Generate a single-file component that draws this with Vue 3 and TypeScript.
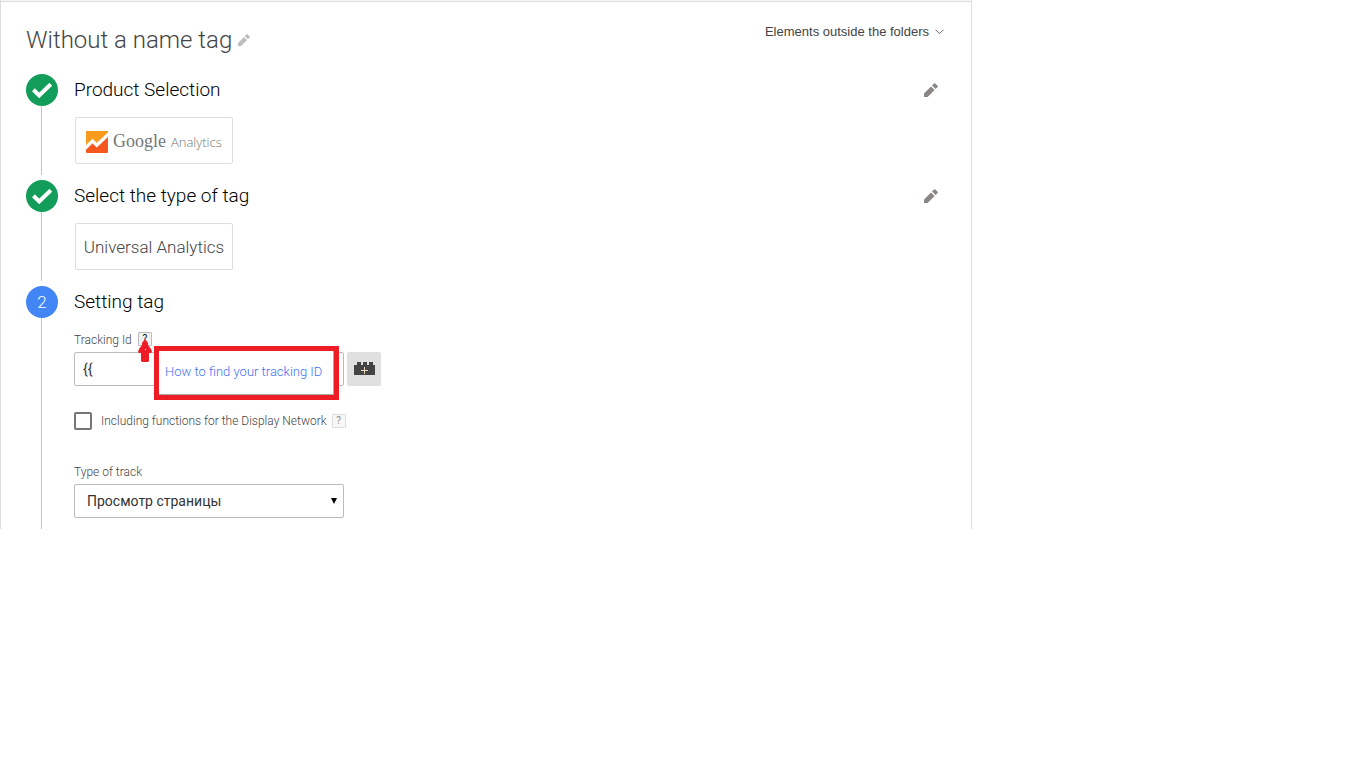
<script setup lang="ts">
import { ref } from 'vue'

const trackingId = ref('{{')
const displayFeatures = ref(false)
const trackType = ref('pageview')
</script>

<template>
  <main class="panel">
    <header class="head">
      <h1 class="title">Without a name tag</h1>
      <button class="icon-btn rename" type="button" aria-label="Rename tag">
        <svg width="12" height="12" viewBox="0 0 14 14" fill="#bdbdbd">
          <path d="M0 10.4V14h3.6l7-7L7 3.4zM13.6 4a.9.9 0 0 0 0-1.2L11.2.4a.9.9 0 0 0-1.2 0L8 2.4 11.6 6z" />
        </svg>
      </button>
      <button class="folders" type="button">
        <span>Elements outside the folders</span>
        <svg width="9" height="6" viewBox="0 0 9 6" fill="none" stroke="#666" stroke-width="1"><path d="M.5.7l4 4 4-4" /></svg>
      </button>
    </header>

    <section class="step">
      <div class="rail">
        <span class="dot done">
          <svg width="32" height="32" viewBox="0 0 32 32" fill="none" stroke="#fff" stroke-width="4"><path d="M7.4 15.8l5.8 5.6L24.8 10.2" /></svg>
        </span>
        <span class="line"></span>
      </div>
      <div class="body">
        <div class="step-head">
          <h2>Product Selection</h2>
          <button class="icon-btn" type="button" aria-label="Edit product selection">
            <svg width="14" height="14" viewBox="0 0 14 14" fill="#8a8682">
              <path d="M0 10.4V14h3.6l7-7L7 3.4zM13.6 4a.9.9 0 0 0 0-1.2L11.2.4a.9.9 0 0 0-1.2 0L8 2.4 11.6 6z" />
            </svg>
          </button>
        </div>
        <div class="card product">
          <svg width="22" height="22" viewBox="0 0 22 22">
            <rect width="22" height="22" rx="1" fill="#f4581f" />
            <path d="M1 0h20a1 1 0 0 1 1 1v3L11 16 7 11 0 17V1a1 1 0 0 1 1-1z" fill="#f99b1c" />
            <path d="M-1 17.2L6.5 10l4.3 4.2L23 2.8" fill="none" stroke="#fff" stroke-width="3.4" />
          </svg>
          <span class="google">Google</span>
          <span class="analytics">Analytics</span>
        </div>
      </div>
    </section>

    <section class="step">
      <div class="rail">
        <span class="dot done">
          <svg width="32" height="32" viewBox="0 0 32 32" fill="none" stroke="#fff" stroke-width="4"><path d="M7.4 15.8l5.8 5.6L24.8 10.2" /></svg>
        </span>
        <span class="line"></span>
      </div>
      <div class="body">
        <div class="step-head">
          <h2>Select the type of tag</h2>
          <button class="icon-btn" type="button" aria-label="Edit tag type">
            <svg width="14" height="14" viewBox="0 0 14 14" fill="#8a8682">
              <path d="M0 10.4V14h3.6l7-7L7 3.4zM13.6 4a.9.9 0 0 0 0-1.2L11.2.4a.9.9 0 0 0-1.2 0L8 2.4 11.6 6z" />
            </svg>
          </button>
        </div>
        <div class="card kind">Universal Analytics</div>
      </div>
    </section>

    <section class="step last">
      <div class="rail">
        <span class="dot current">2</span>
        <span class="line"></span>
      </div>
      <div class="body">
        <div class="step-head">
          <h2>Setting tag</h2>
        </div>

        <div class="field tracking">
          <div class="label-row">
            <label for="tracking-id">Tracking Id</label>
            <button class="help active" type="button" aria-label="Help">?</button>
          </div>
          <div class="control-row">
            <input id="tracking-id" v-model="trackingId" class="text" type="text" />
            <button class="variable" type="button" aria-label="Insert variable">
              <svg width="21" height="14" viewBox="0 0 21 14">
                <path d="M0 3h3V0h4v3h2V0h4v3h2V0h4v3h2v10H0z" fill="#444" />
                <path d="M10.5 5v7M7 8.5h7" stroke="#e8d8b8" stroke-width="1" />
              </svg>
            </button>
          </div>
          <svg class="arrow" width="14" height="23" viewBox="0 0 14 23" fill="#ee1c25">
            <path d="M7 0l3 4v2l3 4 1 3-1 1h-2v8l-1 1H4l-1-1v-8H1l-1-1 1-3 3-4V4z" />
            <rect x="7" y="10" width="1" height="1" fill="#fff" />
          </svg>
          <div class="callout"><a href="#tracking-help">How to find your tracking ID</a></div>
        </div>

        <div class="check-row">
          <input id="display-features" v-model="displayFeatures" class="check" type="checkbox" />
          <label for="display-features">Including functions for the Display Network</label>
          <button class="help" type="button" aria-label="Help">?</button>
        </div>

        <div class="field">
          <div class="label-row"><label for="track-type">Type of track</label></div>
          <div class="select-wrap">
            <select id="track-type" v-model="trackType">
              <option value="pageview">Просмотр страницы</option>
            </select>
            <svg class="caret" width="6" height="6" viewBox="0 0 6 6"><path d="M0 0h6L3 6z" fill="#000" /></svg>
          </div>
        </div>
      </div>
    </section>
  </main>
</template>

<style>
body {
  margin: 0;
  background: #fff;
}
</style>

<style scoped>
.panel {
  box-sizing: border-box;
  max-width: 972px;
  padding: 0 25px;
  border: 1px solid #ddd;
  border-top: 0;
  border-bottom: 0;
  box-shadow: inset 0 1px #f5f5f5, inset 0 2px #ddd;
  font-family: Roboto, "Open Sans", sans-serif;
  font-weight: 300;
  color: #444;
}

button {
  margin: 0;
  padding: 0;
  border: 0;
  background: none;
  font: inherit;
  color: inherit;
  cursor: pointer;
}

svg {
  display: block;
}

.head {
  display: flex;
  align-items: center;
  padding: 24px 2px 18px 0;
}

.title {
  margin: 0;
  font-size: 24px;
  line-height: 32px;
  font-weight: 300;
}

.rename {
  margin-left: 6px;
}

.folders {
  display: flex;
  align-items: center;
  gap: 6px;
  align-self: flex-start;
  margin-left: auto;
  font-family: "Liberation Sans", Arial, sans-serif;
  font-size: 13px;
  line-height: 16px;
  font-weight: 400;
}

.step {
  display: flex;
  gap: 16px;
}

.rail {
  display: flex;
  flex-direction: column;
  width: 32px;
}

.dot {
  flex: none;
  width: 32px;
  height: 32px;
  border-radius: 50%;
  text-align: center;
  font-size: 17px;
  line-height: 32px;
  color: #fff;
}

.done {
  background: #129e5a;
}

.current {
  background: #4285f4;
}

.line {
  flex: 1;
  width: 1px;
  margin: 0 0 5px 15px;
  background: #c4c4c4;
}

.last .line {
  margin-bottom: 0;
}

.body {
  flex: 1;
  padding-bottom: 16px;
}

.last .body {
  padding-bottom: 11px;
}

.step-head {
  display: flex;
  align-items: center;
  justify-content: space-between;
  padding-right: 8px;
}

h2 {
  margin: 0;
  font-size: 19px;
  line-height: 32px;
  font-weight: 300;
  color: #000;
}

.card {
  display: flex;
  align-items: center;
  box-sizing: border-box;
  width: 158px;
  height: 47px;
  margin: 11px 0 0 1px;
  border: 1px solid #ddd;
  border-radius: 2px;
}

.product {
  padding: 2px 0 0 10px;
}

.google {
  margin-left: 5px;
  font-family: "Liberation Serif", "Times New Roman", serif;
  font-size: 18px;
  font-weight: 400;
  color: #757779;
}

.analytics {
  margin-left: 5px;
  font-family: "Open Sans", sans-serif;
  font-size: 13px;
  color: #777;
}

.kind {
  justify-content: center;
  font-size: 17px;
}

.field {
  position: relative;
}

.tracking {
  margin-top: 14px;
}

.label-row {
  display: flex;
  align-items: center;
  gap: 6px;
  height: 16px;
  margin-bottom: 4px;
  font-size: 12px;
  line-height: 16px;
}

.help {
  box-sizing: border-box;
  width: 14px;
  height: 14px;
  border: 1px solid #ddd;
  border-radius: 1px;
  background: #f7f7f7;
  font-size: 10px;
  line-height: 12px;
  font-weight: 400;
  color: #888;
}

.help.active {
  align-self: flex-start;
  border-color: #bbb;
  background: #f1f1f1;
  color: #111;
}

.control-row {
  display: flex;
  gap: 3px;
}

.text,
select {
  box-sizing: border-box;
  width: 270px;
  height: 34px;
  margin: 0;
  border: 1px solid #bbb;
  border-radius: 2px;
  background: #fff;
  font-family: Roboto, sans-serif;
  font-size: 14px;
  color: #333;
}

.text {
  padding: 0 8px;
}

.variable {
  display: flex;
  align-items: center;
  justify-content: center;
  width: 34px;
  height: 34px;
  border-radius: 2px;
  background: #e0e0e0;
}

.arrow {
  position: absolute;
  left: 64px;
  top: 7px;
}

.callout {
  position: absolute;
  left: 80px;
  top: 14px;
  box-sizing: border-box;
  padding: 12px 12px 15px 6px;
  border: 5px solid #ee1c25;
  background: #fff;
  box-shadow: inset -1px -1px #aaa;
  font-size: 13px;
  line-height: 17px;
  white-space: nowrap;
}

.callout a {
  color: #4272f5;
  text-decoration: none;
}

.check-row {
  display: flex;
  align-items: center;
  margin: 26px 0 34px;
  font-size: 12px;
  line-height: 18px;
}

.check {
  appearance: none;
  box-sizing: border-box;
  width: 18px;
  height: 18px;
  margin: 0 9px 0 0;
  border: 2px solid #777;
  border-radius: 2px;
  background: #fff;
}

.check:checked {
  background: #4285f4;
}

.check-row .help {
  margin-left: 5px;
}

.select-wrap {
  position: relative;
  width: 270px;
}

select {
  display: block;
  appearance: none;
  padding: 0 24px 0 12px;
}

.caret {
  position: absolute;
  right: 7px;
  top: 14px;
  pointer-events: none;
}
</style>
